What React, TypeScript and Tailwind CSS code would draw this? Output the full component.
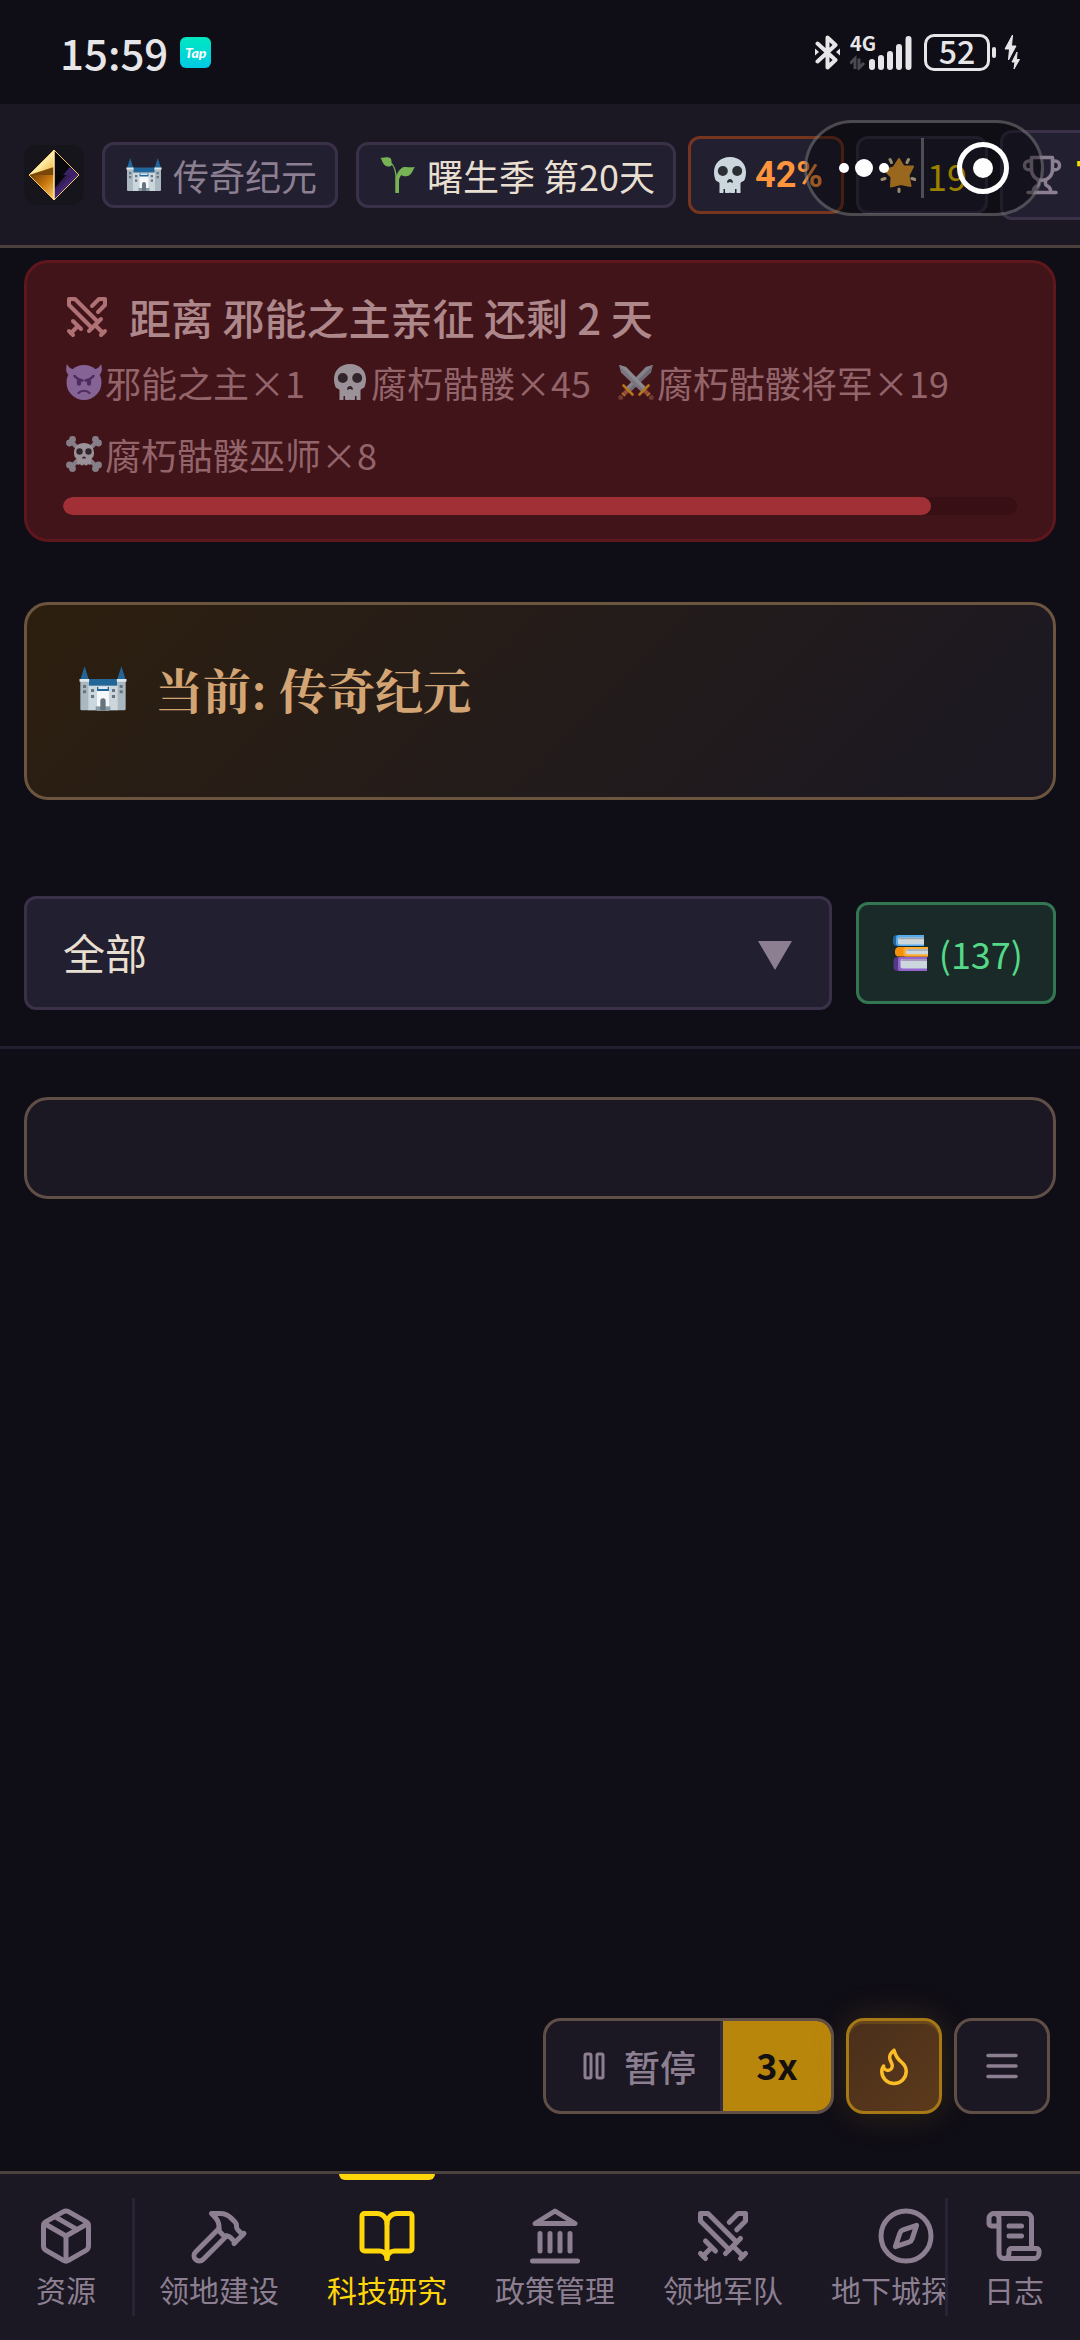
import type { ReactNode } from "react";
import {
  BookOpen,
  Compass,
  Flame,
  Hammer,
  Package,
  ScrollText,
  Swords,
  type LucideIcon,
} from "lucide-react";

type IconProps = { className?: string };

function Emoji({ className = "size-9 mx-[3px]", children }: IconProps & { children: ReactNode }) {
  return (
    <svg viewBox="0 0 36 36" className={`shrink-0 ${className}`} aria-hidden="true">
      {children}
    </svg>
  );
}

function Castle({ className }: IconProps) {
  return (
    <Emoji className={className}>
      <path d="M1 11 4.2 1 7.4 11ZM28.6 11 31.8 1 35 11Z" fill="#226699" />
      <path d="M7 10.500h22v7H7Z" fill="#226699" />
      <path d="M1 12h6.500v22H2a1 1 0 0 1-1-1ZM28.500 12H35v21a1 1 0 0 1-1 1h-5.500Z" fill="#AAB8C2" />
      <path d="M7 15.500h22V34H7Z" fill="#CCD6DD" />
      <path d="M13.500 18.500h9V34h-9Z" fill="#F5F8FA" />
      <path d="M13.500 16.500h9v3h-9Z" fill="#226699" />
      <path d="M14.500 16.500h7v1.500h-7Z" fill="#E1E8ED" />
      <path d="M.4 10.500h7.200v2H.4ZM28.400 10.500h7.200v2h-7.200Z" fill="#E1E8ED" />
      <path d="M12.500 31h11v3h-11Z" fill="#8899A6" />
      <path d="M16 34v-7a2 2 0 0 1 4 0v7Z" fill="#66757F" />
      <path
        d="M3 15h2.300v2.200H3ZM3 19h2.300v2.200H3ZM30.500 15h2.300v2.200h-2.300ZM30.500 19h2.300v2.200h-2.300ZM9 18h2.300v2.200H9ZM9 22.500h2.300v2.200H9ZM24.700 18H27v2.200h-2.300ZM24.700 22.500H27v2.200h-2.300Z"
        fill="#66757F"
      />
    </Emoji>
  );
}

function Seedling() {
  return (
    <Emoji>
      <path
        d="M17 35.500V24c0-8-1.500-14-5.500-18.500C12 2 10 .5 8 .3 5.500 0 3.500 1 .5.800 2.500 3 2 8.500 8 9.500c2 .3 3.200-.5 4-1.500 2.800 4 3.500 9 3.500 16v11.500Z"
        fill="#77B255"
      />
      <path d="M15.500 35.500V22.500c1-6 3.500-9.500 7-12 3-1.500 6 .500 12.500-.500-2 2-3 8-7.500 9-2.500.5-5 .2-6-1-1.500 1.500-2.500 3.500-2.500 6v11.500a1.700 1.700 0 0 1-3.500 0Z" fill="#77B255" />
    </Emoji>
  );
}

function Skull() {
  return (
    <Emoji>
      <path
        d="M18 0C8.500 0 2 6.500 2 15c0 3 .5 5.500 1.500 8 .7 1.700 3.500 1.500 4 3V34a2 2 0 0 0 4 1.200V32h1.500v2.500a2.500 2.500 0 0 0 5 0 2.500 2.500 0 0 0 5 0V32H24.500v3.200a2 2 0 0 0 4-1.200v-8c.5-1.500 3.300-1.300 4-3 1-2.500 1.500-5 1.500-8C34 6.500 27.500 0 18 0Z"
        fill="#CCD6DD"
      />
      <circle cx="10.800" cy="14" r="5" fill="#292F33" />
      <circle cx="25.200" cy="14" r="5" fill="#292F33" />
      <path d="M15 25.500c0-2 1.500-3.500 3-3.500s3 1.500 3 3.500c-1 .8-2-.5-3-.5s-2 1.300-3 .500Z" fill="#292F33" />
    </Emoji>
  );
}

function Devil() {
  return (
    <Emoji>
      <path
        d="M1 0c-1.500 4-1.200 8.500 1.500 11L9 5.500C5 5.300 2.500 3.500 1 0ZM35 0c1.500 4 1.200 8.500-1.500 11L27 5.500c4-.2 6.500-2 8-5.500Z"
        fill="#AA8ED6"
      />
      <circle cx="18" cy="18.500" r="17.500" fill="#AA8ED6" />
      <path d="M8.500 12c2.500 3 5 4 8 4.500M27.500 12c-2.500 3-5 4-8 4.500" stroke="#553788" strokeWidth="2.500" strokeLinecap="round" fill="none" />
      <ellipse cx="13" cy="18.500" rx="2.200" ry="3.200" fill="#553788" />
      <ellipse cx="23" cy="18.500" rx="2.200" ry="3.200" fill="#553788" />
      <path d="M12.500 29c2.500-3 8.500-3 11 0" stroke="#553788" strokeWidth="2.200" strokeLinecap="round" fill="none" />
    </Emoji>
  );
}

function CrossedSwords() {
  return (
    <Emoji>
      <path d="M5 31 10 26" stroke="#BF6952" strokeWidth="4" />
      <path d="M31 31 26 26" stroke="#BF6952" strokeWidth="4" />
      <path d="M35 1 33 8.500 12.500 28 8 23.500 28 3Z" fill="#8899A6" />
      <path d="M35 1 10 26 8 23.500 28 3Z" fill="#A9BBC6" />
      <path d="M1 1 3 8.500 23.500 28 28 23.500 8 3Z" fill="#9AAAB4" />
      <path d="M1 1 26 26l2-2.500L8 3Z" fill="#B4C6D0" />
      <path d="M5.500 21.500 14.500 30.500M30.500 21.500 21.500 30.500" stroke="#F4A91F" strokeWidth="2.600" strokeLinecap="round" />
      <path d="M4 29 7 32M32 29 29 32" stroke="#F4A91F" strokeWidth="1.500" />
      <circle cx="2.700" cy="33.500" r="2.500" fill="#8A4B38" />
      <circle cx="33.300" cy="33.500" r="2.500" fill="#8A4B38" />
    </Emoji>
  );
}

function Crossbones() {
  return (
    <Emoji>
      <path d="M5 5.500 31 31M31 5.500 5 31" stroke="#AAB8C2" strokeWidth="4.500" />
      <g fill="#AAB8C2">
        <circle cx="6.500" cy="3.500" r="3.400" />
        <circle cx="3.500" cy="7" r="3.400" />
        <circle cx="29.500" cy="3.500" r="3.400" />
        <circle cx="32.500" cy="7" r="3.400" />
        <circle cx="6.500" cy="32.500" r="3.400" />
        <circle cx="3.500" cy="29" r="3.400" />
        <circle cx="29.500" cy="32.500" r="3.400" />
        <circle cx="32.500" cy="29" r="3.400" />
      </g>
      <path d="M18 7C12 7 8 11 8 17c0 3 1 5 3 6v4a1.500 1.500 0 0 0 3 .5 2 2 0 0 0 4 0 2 2 0 0 0 4 0 1.500 1.500 0 0 0 3-.500v-4c2-1 3-3 3-6 0-6-4-10-10-10Z" fill="#CCD6DD" />
      <circle cx="13.500" cy="15.500" r="3.200" fill="#292F33" />
      <circle cx="22.500" cy="15.500" r="3.200" fill="#292F33" />
      <path d="M16 22.500a2 2 0 0 1 4 0Z" fill="#292F33" />
    </Emoji>
  );
}

function GlowingStar() {
  return (
    <Emoji>
      <path
        d="M19 2 23.500 9.500 33 9.500 28.500 18.500 30.500 29 20.500 27 11 29.500 11.500 20 4.500 13 13.500 10.500Z"
        fill="#FFAC33"
        stroke="#FFAC33"
        strokeWidth="2"
        strokeLinejoin="round"
      />
      <path d="M10 2.500 11.500 5.500M28.500 2.500 27 5.500M2 22.500 5 21.500M35 22.500 32 21.500M19 32v2.500" stroke="#FFE8B6" strokeWidth="3" strokeLinecap="round" />
    </Emoji>
  );
}

function Books() {
  return (
    <Emoji>
      <path d="M5 0h27v11H5a4 4 0 0 1-4-4V4a4 4 0 0 1 4-4Z" fill="#226699" />
      <path d="M7 0h25v11H7a3 3 0 0 1-3-3V3a3 3 0 0 1 3-3Z" fill="#55ACEE" />
      <path d="M8 2.500h24v7H8a2 2 0 0 1-2-2V4.500a2 2 0 0 1 2-2Z" fill="#CCD6DD" />
      <path d="M8 2.500h24v1.800H6.500Z" fill="#9AAAB4" />
      <path d="M5 22h28v14H5a4 4 0 0 1-3.500-4v-6A4 4 0 0 1 5 22Z" fill="#553788" />
      <path d="M8.500 22H35v14H8.500a2.500 2.500 0 0 1-2.500-2.500v-9A2.500 2.500 0 0 1 8.500 22Z" fill="#9266CC" />
      <path d="M10.500 24H35v9.500H10.500a2 2 0 0 1-2-2V26a2 2 0 0 1 2-2Z" fill="#CCD6DD" />
      <path d="M10.500 24H35v2H9Z" fill="#A89ABF" />
      <path d="M6 12h30v9.500H6a4 4 0 0 1-3-4v-2A4 4 0 0 1 6 12Z" fill="#F4900C" />
      <path d="M14 12h22v9.500H14a2.500 2.500 0 0 1-2.500-2.500v-4.500A2.500 2.500 0 0 1 14 12Z" fill="#FFAC33" />
      <path d="M15.500 14.200H36v5H15.500a1.500 1.500 0 0 1-1.500-1.500v-2a1.500 1.500 0 0 1 1.500-1.500Z" fill="#CCD6DD" />
      <path d="M15.500 14.200H36v1.500H14.500Z" fill="#9AAAB4" />
    </Emoji>
  );
}

function Stroked({ className, children }: IconProps & { children: ReactNode }) {
  return (
    <svg
      viewBox="0 0 24 24"
      fill="none"
      stroke="currentColor"
      strokeWidth="2"
      strokeLinecap="round"
      strokeLinejoin="round"
      className={`shrink-0 ${className ?? ""}`}
      aria-hidden="true"
    >
      {children}
    </svg>
  );
}

function Trophy({ className }: IconProps) {
  return (
    <Stroked className={className}>
      <path d="M6 9H4.500a2.500 2.500 0 0 1 0-5H6M18 9h1.500a2.500 2.500 0 0 0 0-5H18M4 22h16" />
      <path d="M10 14.660V17c0 .55-.47.98-.97 1.210C7.850 18.750 7 20.240 7 22M14 14.660V17c0 .55.47.98.97 1.210C16.150 18.750 17 20.240 17 22" />
      <path d="M18 2H6v7a6 6 0 0 0 12 0V2Z" />
    </Stroked>
  );
}

function Landmark({ className }: IconProps) {
  return (
    <Stroked className={className}>
      <path d="M3 22h18M6 18v-7M10 18v-7M14 18v-7M18 18v-7" />
      <path d="M12 2 20 7H4Z" />
    </Stroked>
  );
}

function Logo() {
  return (
    <svg viewBox="0 0 60 60" className="mr-[18px] size-[60px] shrink-0" role="img" aria-label="logo">
      <defs>
        <linearGradient id="goldTop" x1="0" y1="0" x2="1" y2="1">
          <stop offset="0" stopColor="#b37a1c" />
          <stop offset=".5" stopColor="#fff0b0" />
          <stop offset="1" stopColor="#f0a92c" />
        </linearGradient>
        <linearGradient id="goldBottom" x1="0" y1="0" x2="1" y2="1">
          <stop offset="0" stopColor="#6b3a05" />
          <stop offset=".5" stopColor="#c9790f" />
          <stop offset="1" stopColor="#ffd476" />
        </linearGradient>
        <linearGradient id="violet" x1="0" y1="0" x2="1" y2="1">
          <stop offset="0" stopColor="#120a1c" />
          <stop offset=".6" stopColor="#54308f" />
          <stop offset="1" stopColor="#b48be0" />
        </linearGradient>
      </defs>
      <rect width="60" height="60" rx="12" fill="#17151c" />
      <path d="M30 5 5 30h25Z" fill="url(#goldTop)" />
      <path d="M30 55 5 30h25Z" fill="url(#goldBottom)" />
      <path d="M5 30 30 22v8Z" fill="#7a4708" />
      <path d="M30 5 55 30H30Z" fill="#09080c" />
      <path d="M39 30 46 22 55 30Z" fill="#3c2168" />
      <path d="M30 55 55 30H30Z" fill="url(#violet)" />
      <path d="M30 30h12L30 44Z" fill="#08060c" />
      <path d="M30 5 55 30 30 55 5 30Z" fill="none" stroke="#f3c667" strokeWidth="1" />
      <path d="M30 5v50" stroke="#ffe9a6" strokeWidth="1.500" />
    </svg>
  );
}

function StatusBar() {
  return (
    <div className="flex h-[104px] items-center pl-[60px] pr-[60px] text-[#e6e6e8]">
      <span className="text-[42px] font-medium leading-none">15:59</span>
      <span className="ml-3 flex size-[31px] items-center justify-center rounded-md bg-linear-to-b from-[#00e8c0] to-[#00c8e4] font-[Lato] text-[14px] font-black italic text-white">
        Tap
      </span>
      <div className="ml-auto flex items-center">
        <svg viewBox="0 0 25 35" className="h-[35px] w-[25px]" aria-hidden="true">
          <path d="M2.500 8.500 20.500 25 12.500 32.500V2.500l8 7.500L2.500 26.500" fill="none" stroke="currentColor" strokeWidth="4" strokeLinejoin="round" strokeLinecap="round" />
          <path d="M0 13.500v7L4 17ZM25 13.500v7L21 17Z" fill="currentColor" />
        </svg>
        <div className="relative ml-[10px] h-[35px] w-[62px]">
          <span className="absolute left-0 top-0 text-[20px] font-bold leading-[16px]">4G</span>
          <svg viewBox="0 0 62 35" className="absolute inset-0" aria-hidden="true">
            <path d="M0 28.500 5 23.500V34M9 23.500V33l5-5" fill="none" stroke="#4b4a50" strokeWidth="3" />
            <g stroke="currentColor" strokeWidth="6" strokeLinecap="round">
              <path d="M22 27v5M31 23v9M40 19v13M49 12v20M58.500 4v28" />
            </g>
          </svg>
        </div>
        <span className="ml-3 flex h-[37px] w-[66px] items-center justify-center rounded-[10px] border-[3px] border-current pb-1 text-[32px] font-medium leading-none">
          52
        </span>
        <span className="ml-[2px] h-[11px] w-1 rounded-sm bg-current" />
        <svg viewBox="0 0 16 36" className="ml-2 h-9 w-4" fill="currentColor" stroke="currentColor" strokeLinejoin="round" aria-hidden="true">
          <path d="M8.500 1 1 15h4.500L4.500 26 12 12H7.500ZM13 18 8 28h3l-1 7L15.500 25.500h-3Z" />
        </svg>
      </div>
    </div>
  );
}

function Header() {
  return (
    <header className="relative border-b-[3px] border-[#4b423d] bg-[#1b1823]">
      <div className="flex h-[141px] items-center overflow-hidden whitespace-nowrap pl-6 text-[36px]">
        <Logo />
        <div className="mr-[18px] flex h-[66px] shrink-0 items-center gap-2 rounded-xl border-[3px] border-[#3a3149] bg-[#221f31] px-[18px] text-[#8c7f91]">
          <Castle />
          <span>传奇纪元</span>
        </div>
        <div className="mr-3 flex h-[66px] shrink-0 items-center gap-2 rounded-xl border-[3px] border-[#3a3149] bg-[#221f31] px-[18px] text-[#e8dfd0]">
          <Seedling />
          <span>曙生季 第20天</span>
        </div>
        <div className="mr-3 flex h-[78px] shrink-0 items-center gap-1 rounded-xl border-[3px] border-[#75351f] bg-[#221f31] px-[18px] text-[#ff943d]">
          <Skull />
          <span className="font-[Roboto] font-bold">42%</span>
        </div>
        <div className="mr-3 flex h-[78px] shrink-0 items-center gap-2 rounded-xl border-[3px] border-[#3a3149] bg-[#221f31] px-[18px] text-[#ffd700]">
          <GlowingStar />
          <span>19</span>
        </div>
        <div className="flex h-[90px] shrink-0 items-center gap-3 rounded-xl border-[3px] border-[#3a3149] bg-[#221f31] px-[18px]">
          <Trophy className="size-[42px] text-[#8c7f91]" />
          <span className="pb-1 text-[42px] font-bold leading-none text-[#ffd700]">7</span>
        </div>
      </div>
      <div className="absolute right-9 top-4 flex h-24 w-60 items-center rounded-full border-[3px] border-white/25 bg-black/40">
        <button type="button" aria-label="更多" className="flex h-full w-[114px] items-center justify-center gap-1.5">
          <span className="size-[10px] rounded-full bg-white" />
          <span className="size-[18px] rounded-full bg-white" />
          <span className="size-[10px] rounded-full bg-white" />
        </button>
        <span className="h-[60px] w-[3px] bg-white/25" />
        <button type="button" aria-label="关闭" className="flex h-full flex-1 items-center justify-center">
          <span className="flex size-[52px] items-center justify-center rounded-full border-[5px] border-white">
            <span className="size-5 rounded-full bg-white" />
          </span>
        </button>
      </div>
    </header>
  );
}

const ENEMIES = [
  { icon: <Devil />, name: "邪能之主", count: 1 },
  { icon: <Skull />, name: "腐朽骷髅", count: 45 },
  { icon: <CrossedSwords />, name: "腐朽骷髅将军", count: 19 },
  { icon: <Crossbones />, name: "腐朽骷髅巫师", count: 8 },
];

function InvasionAlert({ progress }: { progress: number }) {
  return (
    <section className="mx-6 mt-3 rounded-3xl border-[3px] border-[#5e171c] bg-[#41141a] px-9 py-6">
      <div className="flex items-center gap-[18px] text-[42px] font-medium leading-[60px] text-[#ae878b]">
        <Swords className="size-12 text-[#b07175]" />
        <h2>距离 邪能之主亲征 还剩 2 天</h2>
      </div>
      <ul className="mt-2 flex flex-wrap gap-x-6 gap-y-[18px] text-[36px] leading-[54px] text-[#93656a]">
        {ENEMIES.map((enemy) => (
          <li key={enemy.name} className="flex items-center">
            <span className="opacity-65">{enemy.icon}</span>
            {enemy.name}×{enemy.count}
          </li>
        ))}
      </ul>
      <div
        role="progressbar"
        aria-valuenow={progress}
        className="mt-4 h-[18px] overflow-hidden rounded-full bg-[#380f14]"
      >
        <div className="h-full rounded-full bg-[#a03035]" style={{ width: `${progress}%` }} />
      </div>
    </section>
  );
}

function EraCard() {
  return (
    <section className="mx-6 mt-[60px] rounded-3xl border-[3px] border-[#6b553f] bg-linear-135 from-[#2d1f0e] to-[#1b1823] p-12">
      <div className="mb-6 flex items-center gap-6">
        <Castle className="mx-1 size-12" />
        <h1 className="font-['Noto_Serif_CJK_SC','Noto_Serif_SC','Noto_Sans_CJK_SC',serif] text-[48px] font-bold leading-[72px] text-[#d4a574]">
          当前: 传奇纪元
        </h1>
      </div>
    </section>
  );
}

function FilterBar() {
  return (
    <div className="mt-24 flex items-center gap-6 border-b-[3px] border-[#221f31] px-6 pb-9">
      <div className="relative flex-1">
        <select
          aria-label="分类"
          className="h-[114px] w-full appearance-none rounded-xl border-[3px] border-[#3a3149] bg-[#221f31] px-9 pb-1 text-[42px] text-[#e8dfd0]"
        >
          <option>全部</option>
        </select>
        <svg viewBox="0 0 34 29" className="pointer-events-none absolute right-10 top-[45px] h-[29px] w-[34px]" aria-hidden="true">
          <path d="M0 0h34L17 29Z" fill="#8c7f91" />
        </svg>
      </div>
      <button
        type="button"
        className="flex h-[102px] items-center gap-2 rounded-xl border-[3px] border-[#327652] bg-[#192a28] px-[30px] text-[36px] text-[#55d987]"
      >
        <Books />
        (137)
      </button>
    </div>
  );
}

function FloatingControls() {
  return (
    <div className="mb-[57px] mr-[30px] mt-auto flex gap-3 self-end text-[36px]">
      <div className="flex h-24 overflow-hidden rounded-[18px] border-[3px] border-[#5f4f47] bg-[#1b1823]">
        <button type="button" className="flex items-center gap-3 border-r-[3px] border-[#332c3f] pl-[30px] pr-6 font-medium text-[#8c7f91]">
          <Stroked className="size-9">
            <rect x="14" y="4" width="4" height="16" rx="1" />
            <rect x="6" y="4" width="4" height="16" rx="1" />
          </Stroked>
          暂停
        </button>
        <button type="button" className="w-[108px] bg-[#b8860b] pb-1 font-bold text-[#14100f]">
          3x
        </button>
      </div>
      <button
        type="button"
        aria-label="狂热"
        className="flex size-24 items-center justify-center rounded-[18px] border-[3px] border-[#a67816] bg-linear-135 from-[#4a2f1b] to-[#5c3a1b] text-[#fbbc28] shadow-[0_0_36px_rgba(251,188,40,0.15),inset_0_3px_0_rgba(251,188,40,0.15)]"
      >
        <Flame className="size-[42px]" />
      </button>
      <button
        type="button"
        aria-label="菜单"
        className="flex size-24 items-center justify-center rounded-[18px] border-[3px] border-[#5f4f47] bg-[#1b1823] text-[#8c7f91]"
      >
        <Stroked className="size-[42px]">
          <path d="M4 6h16M4 12h16M4 18h16" />
        </Stroked>
      </button>
    </div>
  );
}

type Tab = {
  label: string;
  icon: LucideIcon | ((props: IconProps) => ReactNode);
};

const TABS: Tab[] = [
  { label: "领地建设", icon: Hammer },
  { label: "科技研究", icon: BookOpen },
  { label: "政策管理", icon: Landmark },
  { label: "领地军队", icon: Swords },
  { label: "地下城探索", icon: Compass },
];

function TabButton({ tab, active = false, className = "px-6" }: { tab: Tab; active?: boolean; className?: string }) {
  const Icon = tab.icon;

  return (
    <button
      type="button"
      className={`relative flex h-full shrink-0 flex-col items-center gap-1 whitespace-nowrap pt-8 text-[30px] leading-[38px] ${
        active ? "text-[#ffd60a]" : "text-[#8c7f91]"
      } ${className}`}
    >
      {active && <span className="absolute left-1/2 top-0 h-1.5 w-24 -translate-x-1/2 rounded-b-md bg-[#ffd60a]" />}
      <Icon className="size-[60px]" />
      {tab.label}
    </button>
  );
}

function BottomNav() {
  return (
    <nav className="flex h-[169px] border-t-[3px] border-[#4b423d] bg-[#1b1823]">
      <TabButton tab={{ label: "资源", icon: Package }} className="w-[132px]" />
      <span className="my-6 w-[3px] shrink-0 bg-[#272435]" />
      <div className="flex min-w-0 flex-1 overflow-hidden">
        {TABS.map((tab) => (
          <TabButton key={tab.label} tab={tab} active={tab.label === "科技研究"} />
        ))}
      </div>
      <span className="my-6 w-[3px] shrink-0 bg-[#272435]" />
      <TabButton tab={{ label: "日志", icon: ScrollText }} className="w-[132px]" />
    </nav>
  );
}

export default function App() {
  return (
    <div className="flex min-h-screen flex-col bg-[#0f0d16] font-['Noto_Sans_CJK_SC',sans-serif]">
      <StatusBar />
      <Header />
      <InvasionAlert progress={91} />
      <EraCard />
      <FilterBar />
      <div className="mx-6 mt-12 h-[102px] rounded-3xl border-[3px] border-[#5f4f47] bg-[#1b1823]" />
      <FloatingControls />
      <BottomNav />
    </div>
  );
}
